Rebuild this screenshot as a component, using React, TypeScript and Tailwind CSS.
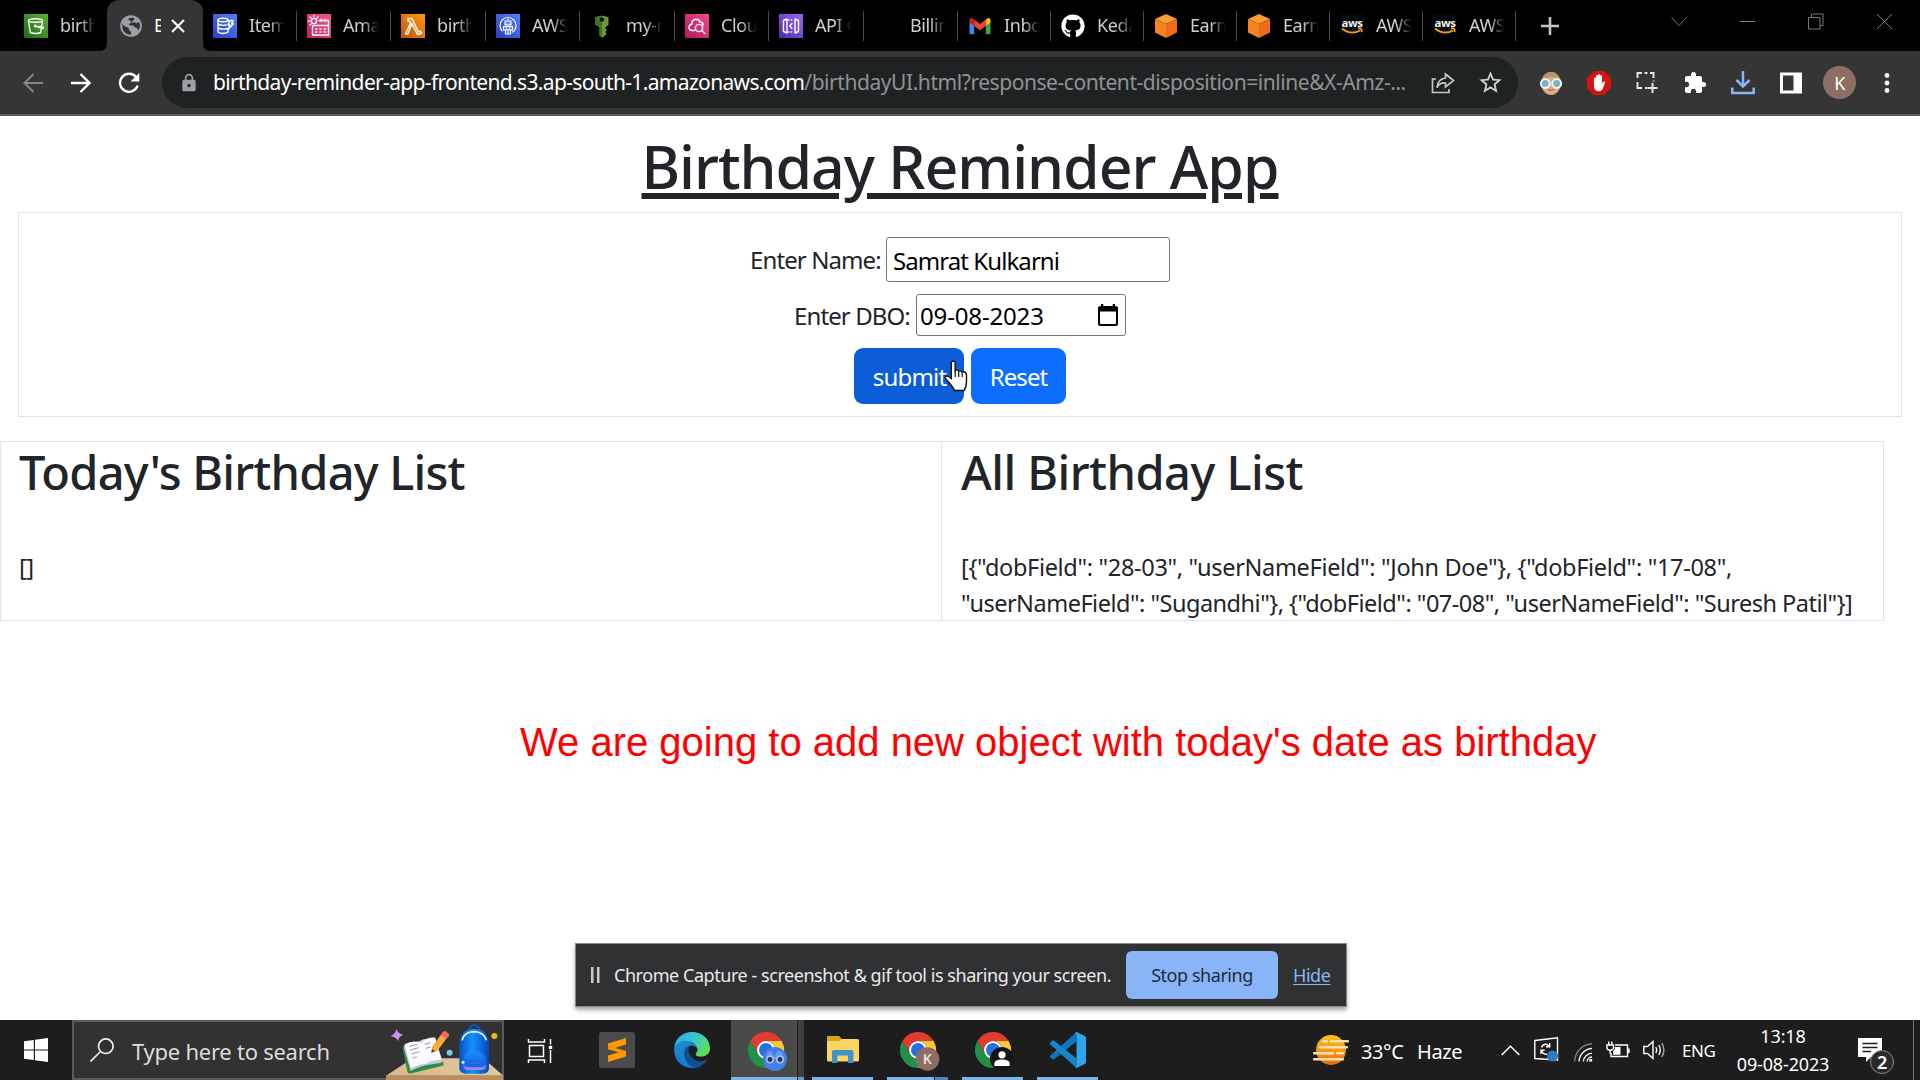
import React from "react";
import { FaGithub } from "react-icons/fa";
import { MdLock, MdStarBorder, MdExtension } from "react-icons/md";

type Tab = { title: string; icon: React.ReactNode; width: string };

const line = { fill: "none", stroke: "#fff", strokeWidth: 1.4, strokeLinecap: "round", strokeLinejoin: "round" } as const;

function Tile({ id, from, to, children }: { id: string; from: string; to: string; children: React.ReactNode }) {
  return (
    <svg viewBox="0 0 24 24" className="size-6">
      <defs>
        <linearGradient id={id} x1="0" y1="1" x2="1" y2="0">
          <stop offset="0" stopColor={from} />
          <stop offset="1" stopColor={to} />
        </linearGradient>
      </defs>
      <rect width="24" height="24" fill={`url(#${id})`} />
      <g {...line}>{children}</g>
    </svg>
  );
}

const S3Icon = () => (
  <Tile id="s3" from="#1f6b1c" to="#5fae35">
    <ellipse cx="11.5" cy="6.5" rx="7" ry="1.8" />
    <path d="M4.5 7 L6.3 18.5 Q11.5 20.5 16.7 18.5 L18.5 7 M11.5 12 L18.5 14.5 M15.8 12.5 Q19.5 12.5 19.5 14.2" />
    <circle cx="11.3" cy="12" r="0.8" fill="#fff" />
  </Tile>
);

const DynamoIcon = () => (
  <Tile id="ddb" from="#2e3fbf" to="#527fff">
    <ellipse cx="10" cy="6" rx="5" ry="1.8" />
    <path d="M5 6 V18 Q10 21 15 18 V15.5 M5 10 Q9 12 13 11 M5 14 Q10 16 14.5 14.5 M15 6 V7 M17 6.5 H20 L18.5 9.5 H20.5 L15.5 15 L16.8 11 H15 Z" />
  </Tile>
);

const EventIcon = () => (
  <Tile id="evt" from="#c21f5e" to="#f5558d">
    <circle cx="7" cy="7" r="2.6" />
    <path d="M7 1.5 V2.6 M1.5 7 H2.6 M3 3 L4 4 M11 3 L10 4 M3 11 L4 10 M12 6.5 H21.5 V21 H5.5 V12 M5.5 11.5 H21.5 M18 5 V7.5 M14 5 V7.5" />
    <path d="M8.5 15 H10 M12.8 15 H14.2 M17 15 H18.5 M8.5 18 H10 M12.8 18 H14.2 M17 18 H18.5" />
  </Tile>
);

const LambdaIcon = () => (
  <Tile id="lam" from="#c4510f" to="#ff9c08">
    <path d="M7 4.5 H11 L17.5 18 L19.5 17 L20.5 19.3 L16.5 20.5 L11 9.5 L6.8 20 H4.5 L9.7 8.5 L8.8 7 H7 Z" />
  </Tile>
);

const AwsBotIcon = () => (
  <Tile id="bot" from="#2e3fbf" to="#527fff">
    <g strokeWidth="1.2">
      <circle cx="12" cy="11.5" r="8" strokeDasharray="39 11.3" strokeDashoffset="-19" />
      <path d="M9 7 H15 V10.8 H9 Z M7.5 12.6 H16.5 V15.8 H7.5 Z M12 5 V7 M9.5 16 V20 H14.5 V16 M10.6 9 H11 M13.1 9 H13.5 M10.2 14.2 H10.6 M13.4 14.2 H13.8 M12 17 V19.6" />
    </g>
  </Tile>
);

const KeyIcon = () => (
  <svg viewBox="0 0 24 24" className="size-6">
    <path d="M5 3.5 Q12 0 18.5 3.5 V11 L15.5 13 V14.5 L17 16 L15.5 18 L16.5 20 L13 23.5 L9.5 22 V13 L5 10.5 Z" fill="#6b9a3a" />
    <path d="M5 3.5 Q8.5 1.5 12 1.7 V23 L9.5 22 V13 L5 10.5 Z" fill="#46702a" />
    <circle cx="12" cy="5.6" r="2.2" fill="#0a1206" />
  </svg>
);

const CloudIcon = () => (
  <Tile id="cw" from="#b0155c" to="#f24c8c">
    <path d="M9.5 16.5 H7 Q3.7 16 4 13 Q4.4 10.5 6.8 10.2 Q6.5 6 10.5 5.2 Q14 5 15 8 Q18 8 18.2 11" />
    <circle cx="14" cy="14" r="3.6" />
    <path d="M16.7 16.5 L20 19.5" />
  </Tile>
);

const ApiIcon = () => (
  <Tile id="api" from="#4f2aa8" to="#9668f0">
    <path d="M4.5 6.5 L8 5 V19 L4.5 17.5 Z M19.5 6.5 L16 5 V19 L19.5 17.5 Z M13 9.5 L10.8 12 L13 14.5" />
    <path d="M9.5 6 H14.5 M9.5 18 H14.5" strokeDasharray="0.5 2.2" />
  </Tile>
);

const GmailIcon = () => (
  <svg viewBox="0 0 24 24" className="size-6">
    <path d="M1.5 8 V19 Q1.5 20.2 2.7 20.2 H6.2 V11.5 Z" fill="#4285f4" />
    <path d="M22.5 8 V19 Q22.5 20.2 21.3 20.2 H17.8 V11.5 Z" fill="#34a853" />
    <path d="M6.2 5.5 V12 L12 16.3 L17.8 12 V5.5 L12 10 Z" fill="#ea4335" />
    <path d="M1.5 6 Q1.7 3 4.6 4.3 L6.2 5.5 V12 L1.5 8.5 Z" fill="#c5221f" />
    <path d="M22.5 6 Q22.3 3 19.4 4.3 L17.8 5.5 V12 L22.5 8.5 Z" fill="#fbbc04" />
  </svg>
);

const BoxIcon = () => (
  <svg viewBox="0 0 24 24" className="size-6">
    <path d="M12 0 L23 5 L12 10 L1 5 Z" fill="#fa9a33" />
    <path d="M1 5 L12 10 V24 L1 18.5 Z" fill="#f68220" />
    <path d="M23 5 L12 10 V24 L23 18.5 Z" fill="#ef6a1b" />
  </svg>
);

const AwsIcon = () => (
  <svg viewBox="0 0 24 24" className="size-6">
    <rect width="24" height="24" fill="#04080d" />
    <text x="12" y="12.5" textAnchor="middle" fontSize="11" fontWeight="700" fill="#f2f2f2" fontFamily="Open Sans, sans-serif" textLength="21" lengthAdjust="spacingAndGlyphs">aws</text>
    <path d="M2 14.5 Q11 21.5 20 16.5 M18 14.5 Q22.5 13.5 21.5 18" fill="none" stroke="#f39a1f" strokeWidth="1.9" />
  </svg>
);

const tabs: Tab[] = [
  { title: "Items", icon: <DynamoIcon />, width: "w-[94px]" },
  { title: "Amaz", icon: <EventIcon />, width: "w-[94px]" },
  { title: "birthd", icon: <LambdaIcon />, width: "w-[95px]" },
  { title: "AWS", icon: <AwsBotIcon />, width: "w-[94px]" },
  { title: "my-re", icon: <KeyIcon />, width: "w-[95px]" },
  { title: "Cloud", icon: <CloudIcon />, width: "w-[94px]" },
  { title: "API G", icon: <ApiIcon />, width: "w-[95px]" },
  { title: "Billing", icon: <span className="size-6" />, width: "w-[94px]" },
  { title: "Inbox", icon: <GmailIcon />, width: "w-[93px]" },
  { title: "Kedar", icon: <FaGithub className="size-6 text-white" />, width: "w-[93px]" },
  { title: "Earn", icon: <BoxIcon />, width: "w-[93px]" },
  { title: "Earn", icon: <BoxIcon />, width: "w-[93px]" },
  { title: "AWS", icon: <AwsIcon />, width: "w-[93px]" },
  { title: "AWS", icon: <AwsIcon />, width: "w-[93px]" },
];

function TabTitle({ children }: { children: React.ReactNode }) {
  return (
    <span className="mb-px ml-3 w-9 overflow-hidden text-lg leading-6 whitespace-nowrap text-[#cfcfcf] [mask-image:linear-gradient(to_right,black_55%,transparent)]">
      {children}
    </span>
  );
}

function TabStrip() {
  return (
    <div className="flex h-[51px] bg-black">
      <div className="flex w-[107px] items-center pl-6">
        <S3Icon />
        <TabTitle>birthd</TabTitle>
      </div>
      <div className="relative flex w-24 items-center rounded-t-xl bg-[#353535] pl-[12px]">
        <svg viewBox="0 0 8 8" className="absolute bottom-0 -left-2 size-2"><path d="M8 0 Q8 8 0 8 H8 Z" fill="#353535" /></svg>
        <svg viewBox="0 0 8 8" className="absolute -right-2 bottom-0 size-2"><path d="M0 0 Q0 8 8 8 H0 Z" fill="#353535" /></svg>
        <svg viewBox="0 0 24 24" className="size-6">
          <circle cx="12" cy="12" r="10.8" fill="#9aa0a6" />
          <path d="M3.2 9 Q4.5 12.5 7.5 13 Q10 13.3 10 15.5 Q10 17 12 17.5 V20.7 Q5 20.5 3.5 14.5 Z M9 5 Q12 3 15 4 Q15.5 7 12.5 7.5 Q12 9.5 9.5 10 Q10 11.5 14.5 11.7 Q15.5 13.5 18 14 L19.5 16.5 Q22 12 20 8 Q18 10 16 8.5 Q14 8 13.5 9 Z" fill="#2f3133" />
        </svg>
        <span className="mb-px ml-[11px] w-[7px] overflow-hidden text-lg leading-6 text-white">B</span>
        <svg viewBox="0 0 14 14" className="ml-[10px] size-3.5"><path d="M1 1 L13 13 M13 1 L1 13" stroke="#fff" strokeWidth="2.2" /></svg>
      </div>
      {tabs.map((t, i) => (
        <div key={i} className={"flex items-center pl-2.5 " + t.width}>
          {t.icon}
          <TabTitle>{t.title}</TabTitle>
          <span className="ml-auto h-[30px] w-px bg-[#4a4a4a]" />
        </div>
      ))}
      <div className="flex flex-1 items-center pl-[25px]">
        <svg viewBox="0 0 18 18" className="size-[18px]"><path d="M9 0 V18 M0 9 H18" stroke="#c4c4c4" strokeWidth="2.6" /></svg>
        <svg viewBox="0 0 226 22" className="mb-[9px] ml-[112px] h-[22px] w-[226px]" fill="none" stroke="#777" strokeWidth="1">
          <path d="M.5 7.5 L8 15.5 L15.5 7.5 M68.5 11.5 H84 M137.5 7.5 H149 V19 H137.5 Z M140.5 7.5 V4 H152 V15.5 H149 M206 4 L221 19 M221 4 L206 19" />
        </svg>
      </div>
    </div>
  );
}

function Toolbar() {
  return (
    <div className="flex h-[65px] items-center border-b-2 border-[#5c5d5d] bg-[#353535]">
      <svg viewBox="0 0 20 20" className="ml-[23px] size-5" fill="none" stroke="#858585" strokeWidth="2.1"><path d="M20 10 H1.5 M10.5 1 L1.5 10 L10.5 19" /></svg>
      <svg viewBox="0 0 20 20" className="ml-7 size-5" fill="none" stroke="#fff" strokeWidth="2.3"><path d="M0 10 H18.5 M9.5 1 L18.5 10 L9.5 19" /></svg>
      <svg viewBox="0 0 22 22" className="ml-[27px] size-[22px]">
        <path d="M18.2 5.4 A9 9 0 1 0 19.6 13.5" fill="none" stroke="#fff" strokeWidth="2.4" />
        <path d="M21.3 1 V9.5 H12.5 Z" fill="#fff" />
      </svg>
      <div className="ml-[22px] flex h-[51px] w-[1356px] items-center rounded-full bg-[#1f2223]">
        <MdLock className="ml-[17px] size-5 text-[#9aa0a6]" />
        <span className="mb-px ml-3.5 w-[1218px] text-[21px] leading-7 tracking-[-0.44px] whitespace-nowrap text-[#8e9296]">
          <span className="tracking-[-0.66px] text-white">birthday-reminder-app-frontend.s3.ap-south-1.amazonaws.com</span>
          /birthdayUI.html?response-content-disposition=inline&amp;X-Amz-...
        </span>
        <svg viewBox="0 0 24 24" className="size-6" fill="none" stroke="#c4c7c9" strokeWidth="1.7">
          <path d="M5 8 H1.5 V21.5 H18 V18 M14.5 3 L22.5 9.5 L14.5 16 V12 Q8.5 11.5 6 16.5 Q6.5 8 14.5 7 Z" />
        </svg>
        <MdStarBorder className="ml-[22px] size-[27px] text-[#d0d3d5]" />
      </div>
      <svg viewBox="0 0 24 24" className="ml-[21px] size-6">
        <ellipse cx="12" cy="12.5" rx="10" ry="11.5" fill="#b99a6b" />
        <path d="M4 9 Q12 2 20 9 V16 Q18 23 12 23.5 Q6 23 4 16 Z" fill="#e0ab8c" />
        <path d="M3 9 Q8 8 13 3 Q17 7 21 9 Q19 1 12 1 Q5 1 3 9" fill="#b59a66" />
        <circle cx="6.3" cy="12.5" r="4.4" fill="#7fb3c4" stroke="#f4f4f4" strokeWidth="2" />
        <circle cx="17.7" cy="12.5" r="4.4" fill="#7fb3c4" stroke="#f4f4f4" strokeWidth="2" />
        <path d="M9 18.5 Q12 20.5 15 18.5" stroke="#8b5a45" fill="none" />
      </svg>
      <svg viewBox="0 0 24 24" className="ml-6 size-6">
        <path d="M7 0 H17 L24 7 V17 L17 24 H7 L0 17 V7 Z" fill="#d8120f" />
        <path d="M7 12 V7.5 a1 1 0 0 1 2 0 V11 V5 a1 1 0 0 1 2 0 V10.5 V4 a1 1 0 0 1 2 0 V10.5 V5 a1 1 0 0 1 2 0 V12.5 L16.3 11 Q17.8 9.5 18.3 11 L16 17 Q15 20.3 11.5 20.3 Q7 20 7 15 Z" fill="#fff" />
      </svg>
      <svg viewBox="0 0 24 24" className="ml-6 size-6" fill="none" stroke="#e6e6e6" strokeWidth="1.9">
        <path d="M7 2 H2.5 V7 M2.5 11 V17 H7 M9.5 2 H12.5 M15 2 H18.5 V7 M18.5 9.5 V10.5 M10 17 H12 M17.5 12 V22 M12.5 17 H22.5" />
      </svg>
      <MdExtension className="ml-6 size-6 text-white" />
      <svg viewBox="0 0 24 24" className="ml-6 size-6" fill="none" stroke="#8ab4f8" strokeWidth="2.5">
        <path d="M12 0 V15 M5.5 9 L12 15.5 L18.5 9 M1.3 16.5 V22 H22.7 V16.5" />
      </svg>
      <svg viewBox="0 0 22 22" className="ml-[25px] size-[22px]"><path d="M0 .5 H22 V21.5 H0 Z M3 3.5 V18.5 H13.5 V3.5 Z" fill="#fff" fillRule="evenodd" /></svg>
      <span className="ml-[21px] flex size-[33px] items-center justify-center rounded-full bg-[#8d6e63] text-lg text-white">K</span>
      <svg viewBox="0 0 6 20" className="ml-[28px] h-5 w-1.5" fill="#fff"><circle cx="3" cy="2.5" r="2.4" /><circle cx="3" cy="10" r="2.4" /><circle cx="3" cy="17.5" r="2.4" /></svg>
    </div>
  );
}

function HandCursor() {
  return (
    <svg viewBox="0 0 24 32" className="absolute top-3 left-[90px] h-8 w-6">
      <path d="M7.3 18.5 V3 Q7.5 1 9.3 1 Q11 1 11.2 3 V10.5 Q12.8 9 14.5 11 Q16.5 10 18 12 Q21.5 11 22.5 14.5 V21 Q22.5 27 20 30.5 H10.5 Q9 27 4.5 22 Q0 17.5 1.5 16.3 Q3.5 15 7.3 18.5 Z" fill="#fff" stroke="#111" strokeWidth="1.4" />
      <path d="M11.2 10.5 V17 M14.7 11.5 V17 M18.2 12.5 V17" stroke="#111" strokeWidth="1.2" />
    </svg>
  );
}

function Page() {
  return (
    <main className="flex h-[904px] flex-col bg-white pt-3.5 text-2xl tracking-[-0.6px] text-[#212529]">
      <h1 className="mb-2.5 pt-px text-center text-[59px] leading-[71px] font-medium tracking-[-1.02px] underline decoration-[6px] underline-offset-[3.5px]">
        Birthday Reminder App
      </h1>
      <form className="mx-[18px] flex h-[205px] flex-col items-center border border-[#dee2e6] pt-6">
        <label className="flex items-center">
          <span className="w-[136px] pt-px tracking-[-0.9px] whitespace-nowrap">Enter Name:</span>
          <input readOnly value="Samrat Kulkarni" className="h-[45px] w-[284px] rounded-[3px] border border-[#767676] pt-px pl-1.5 tracking-[-0.93px] text-black outline-none" />
        </label>
        <label className="mt-3 flex items-center">
          <span className="w-[122px] pt-px tracking-[-0.9px] whitespace-nowrap">Enter DBO:</span>
          <span className="flex h-[42px] w-[210px] items-center rounded-[3px] border border-[#767676] pr-[7px] pl-[3px] text-black">
            <span className="pt-px tracking-[-0.15px]">09-08-2023</span>
            <svg viewBox="0 0 20 22" className="mb-px ml-auto h-[22px] w-5"><path d="M3 0 H5.2 V2 H14.8 V0 H17 V2 Q20 2 20 4 V20 Q20 22 18 22 H2 Q0 22 0 20 V4 Q0 2 3 2 Z M2 7.5 V20 H18 V7.5 Z" fillRule="evenodd" /></svg>
          </span>
        </label>
        <div className="relative mt-3 flex gap-[7px] text-white">
          <button type="button" className="h-14 w-[110px] rounded-[9px] bg-[#0b5ed7] pt-0.5 pl-px tracking-[-0.8px]">submit</button>
          <button type="button" className="h-14 w-[95px] rounded-[9px] bg-[#0d6efd] pt-0.5 tracking-[-0.9px]">Reset</button>
          <HandCursor />
        </div>
      </form>
      <div className="mt-6 flex h-[180px] w-[1884px] border border-[#dee2e6]">
        <section className="w-[942px] border-r border-[#dee2e6] pt-px pl-[18px]">
          <h2 className="mb-12 text-[47px] leading-[58px] font-medium tracking-[-0.76px]">Today's Birthday List</h2>
          <p className="leading-9">[]</p>
        </section>
        <section className="w-[942px] pt-px pl-[19px]">
          <h2 className="mb-12 text-[47px] leading-[58px] font-medium tracking-[-0.52px]">All Birthday List</h2>
          <p className="text-[23.5px] leading-9 tracking-[-0.5px] whitespace-nowrap">
            <span className="tracking-[-0.32px]">{'[{"dobField": "28-03", "userNameField": "John Doe"}, {"dobField": "17-08",'}</span>
            <br />
            {'"userNameField": "Sugandhi"}, {"dobField": "07-08", "userNameField": "Suresh Patil"}]'}
          </p>
        </section>
      </div>
      <p className="mt-[98px] pl-[520px] font-['Liberation_Sans'] text-[40px] leading-[46px] tracking-normal text-[#ff0000]">
        We are going to add new object with today's date as birthday
      </p>
      <div className="mt-auto mb-[13px] ml-[575px] flex h-16 w-[772px] items-center border border-[#8a8a8a] bg-[#2f3133] pl-[15px] text-lg tracking-[-0.45px] text-[#e8eaed] shadow-[0_3px_4px_rgba(0,0,0,0.35)]">
        <svg viewBox="0 0 9 16" className="h-4 w-[9px]"><path d="M0 0 H2.5 V16 H0 Z M6 0 H8.5 V16 H6 Z" fill="#c8cacc" /></svg>
        <span className="mb-px ml-[14px] w-[512px] whitespace-nowrap">Chrome Capture - screenshot &amp; gif tool is sharing your screen.</span>
        <button type="button" className="h-12 w-[152px] rounded-md bg-[#8ab4f8] text-[#202c40]">Stop sharing</button>
        <a className="ml-[15px] text-[#8ab4f8] underline underline-offset-2">Hide</a>
      </div>
    </main>
  );
}

function SearchArt() {
  return (
    <svg viewBox="18 15 354 180" className="ml-auto h-[60px] w-[118px]">
      <defs>
        <linearGradient id="desk" x1="0" x2="1"><stop offset="0" stopColor="#d9b98c" /><stop offset="1" stopColor="#e3c79c" /></linearGradient>
        <linearGradient id="bag" x1="0" x2="1"><stop offset="0" stopColor="#0a52c4" /><stop offset=".45" stopColor="#1490ff" /><stop offset="1" stopColor="#0a48b8" /></linearGradient>
        <linearGradient id="pocket" x1="0" y1="0" x2="0" y2="1"><stop offset="0" stopColor="#1c8dff" /><stop offset=".6" stopColor="#1769e8" /><stop offset="1" stopColor="#b68cf5" /></linearGradient>
      </defs>
      <path d="M18 182 L98 130 H310 L370 182 Z" fill="url(#desk)" />
      <path d="M18 182 H370 V195 H18 Z" fill="#b98d5c" />
      <path d="M50 41 Q52 54 70 60 Q56 63 55 78 Q48 66 32 63 Q47 56 50 41 Z" fill="#d58bf5" />
      <path d="M68 98 L82 170 Q84 178 96 175 L188 152 Q193 150 190 144 L182 126 Z" fill="#2f8f45" />
      <path d="M70 92 L120 78 Q128 70 165 72 L186 132 Q190 142 180 144 L140 150 Q110 158 92 168 Z" fill="#c9c9e4" />
      <path d="M74 88 Q100 74 124 84 L138 146 Q110 148 92 160 Z M124 84 Q140 66 166 68 L184 134 Q155 134 138 146 Z" fill="#fbfbff" />
      <path d="M88 94 L112 88 M91 105 L116 98 M94 117 L119 110 M97 129 L110 125 M134 88 L152 83 M137 100 L152 96" stroke="#9a9ab4" strokeWidth="3" />
      <path d="M156 96 L184 58 L200 70 L172 108 L154 114 Z" fill="#f7ab3a" />
      <path d="M182 60 L190 49 Q194 46 199 50 L206 56 Q209 60 206 64 L199 72 Z" fill="#ee6c5a" />
      <path d="M154 114 L156 102 L165 108 Z" fill="#5a3a2a" />
      <circle cx="209" cy="113" r="9" fill="#73cbe0" />
      <circle cx="343" cy="63" r="9" fill="#f5b51e" />
      <path d="M267 46 Q270 31 283 31 Q296 31 299 46" fill="none" stroke="#0d55b8" strokeWidth="6" />
      <path d="M238 88 Q240 42 282 41 Q326 42 327 88 V160 Q326 176 308 176 H256 Q238 175 238 160 Z" fill="url(#bag)" />
      <path d="M246 76 Q252 51 282 50 Q312 51 319 76" fill="none" stroke="#dcefff" strokeWidth="5" />
      <path d="M250 136 Q254 108 283 107 Q314 108 318 136 V152 Q316 165 304 165 H264 Q252 164 250 152 Z" fill="url(#pocket)" />
      <path d="M250 136 Q265 148 283 148 Q302 148 318 136 V148 Q310 156 304 156 H264 Q255 154 250 148 Z" fill="#1467e0" />
      <circle cx="249" cy="142" r="4.5" fill="#f2f6ff" />
    </svg>
  );
}

function ChromeLogo({ children }: { children: React.ReactNode }) {
  return (
    <svg viewBox="0 0 42 42" className="mt-1 ml-[7px] size-[42px]">
      <path d="M18 9 H33.6 A18 18 0 0 0 2.4 9 L10.2 22.5 A9 9 0 0 1 18 9Z" fill="#e33b2e" />
      <path d="M33.6 9 A18 18 0 0 1 18 36 L25.8 22.5 A9 9 0 0 0 18 9Z" fill="#fcc934" />
      <path d="M2.4 9 A18 18 0 0 0 18 36 L25.8 22.5 A9 9 0 0 1 10.2 22.5Z" fill="#1f9247" />
      <circle cx="18" cy="18" r="9" fill="#fff" />
      <circle cx="18" cy="18" r="7" fill="#2a6fe0" />
      {children}
    </svg>
  );
}

function EdgeLogo() {
  return (
    <svg viewBox="0 0 36 36" className="size-9">
      <defs>
        <linearGradient id="edgeTop" x1="0" y1="0.2" x2="1" y2="0.6"><stop offset="0" stopColor="#2aa7dd" /><stop offset=".5" stopColor="#35c8d0" /><stop offset="1" stopColor="#63e04c" /></linearGradient>
        <linearGradient id="edgeLeft" x1="0" y1="0" x2="0.6" y2="1"><stop offset="0" stopColor="#2389c8" /><stop offset="1" stopColor="#0b7bd4" /></linearGradient>
      </defs>
      <path d="M.3 16 C1 6 9 0 18 0 C28 0 36 7 36 16.5 C36 22 31.5 24.5 27 24.5 C22 24.5 20.8 22.7 22.2 21 C23.5 19.5 23.8 18 23.3 16 C21 9 6 7 .3 16Z" fill="url(#edgeTop)" />
      <path d="M.3 16 C3 10.5 8 8.5 12.5 8.8 C19 9 23 12.5 23.4 17 C21.5 13.2 17 12.2 14.5 15 C10 20 14 30 23 30.5 C28 30.7 30.5 28.5 33 27.5 C30 33 24 36 18 36 C7 36 -1 27 .3 16Z" fill="url(#edgeLeft)" />
      <path d="M15.5 13.5 C9 15.5 9.5 24 12 28.5 C14 32.5 17.5 35.5 21.5 35.6 C27 34.8 31 31.5 33.2 27.5 C29 30 24.5 30 20.5 27.5 C15 24 13.3 18 15.5 13.5Z" fill="#124e94" />
    </svg>
  );
}

function TaskItem({ bar, children }: { bar?: boolean; children: React.ReactNode }) {
  return (
    <div className="flex h-full w-[75px] flex-col items-center">
      <div className="flex flex-1 items-center justify-center">{children}</div>
      <span className={bar ? "h-[3px] w-[61px] bg-[#7ab4e8]" : "h-[3px]"} />
    </div>
  );
}

function Taskbar() {
  return (
    <footer className="flex h-[60px] items-center bg-[#1e1d1d] text-white">
      <svg viewBox="0 0 24 24" className="ml-6 size-6" fill="#fff"><path d="M0 3.3 L9.8 2 V11.4 H0 Z M11 1.8 L24 0 V11.4 H11 Z M0 12.6 H9.8 V22 L0 20.7 Z M11 12.6 H24 V24 L11 22.2 Z" /></svg>
      <div className="ml-6 flex h-[60px] w-[432px] items-center bg-[#323232] shadow-[inset_0_0_0_2px_#5b5b5b]">
        <svg viewBox="0 0 24 24" className="ml-[18px] size-6" fill="none" stroke="#f0f0f0" strokeWidth="1.7"><circle cx="15.8" cy="8.2" r="7.3" /><path d="M10.5 13.5 L.5 23.5" /></svg>
        <span className="mt-[3px] ml-[18px] text-[22px] tracking-[-0.25px] whitespace-nowrap text-[#dcdcdc]">Type here to search</span>
        <SearchArt />
      </div>
      <TaskItem>
        <svg viewBox="0 0 26 24" className="-mb-1 ml-[-3px] h-6 w-[26px]" fill="none" stroke="#fff" strokeWidth="1.5">
          <path d="M2.5 6.5 H16.5 V17.5 H2.5 Z M1.5 0 V3 H17.5 V0 M1.5 24 V21 H17.5 V24 M23.5 0 V5.5 M23.5 11 V24" />
          <path d="M21.8 6.8 H25.2 V10 H21.8 Z" fill="#fff" stroke="none" />
        </svg>
      </TaskItem>
      <TaskItem>
        <svg viewBox="0 0 36 36" className="mt-[3px] size-9">
          <rect width="36" height="36" rx="2.5" fill="#4b4b4b" />
          <path d="M9 11.5 L27 6 V12.5 L16 16 L27 19 V24.5 L9 30 V23.5 L20 20.3 L9 17.3 Z" fill="#ff9800" />
        </svg>
      </TaskItem>
      <TaskItem><div className="mt-[3px]"><EdgeLogo /></div></TaskItem>
      <div className="flex h-full w-[75px] pl-[2px]">
        <div className="flex h-full w-[66px] flex-col items-center bg-[#4a4a4a]">
          <div className="flex flex-1 items-center pt-[5px] pl-[3px]">
            <ChromeLogo>
              <circle cx="27" cy="27" r="12" fill="#4380ea" />
              <path d="M17.5 27 L20 20 L23 19 L26 25 L30 19 L34 20 L36 27" fill="#6a9af2" />
              <circle cx="22" cy="27.5" r="3.2" fill="#20355c" stroke="#a8bfe8" strokeWidth="1.6" />
              <circle cx="32" cy="27.5" r="3.2" fill="#20355c" stroke="#a8bfe8" strokeWidth="1.6" />
            </ChromeLogo>
          </div>
          <span className="h-[3px] w-full bg-[#7ab4e8]" />
        </div>
        <div className="flex h-full w-[7px] flex-col border-l border-[#1e1d1d] bg-[#3f3f3f]"><span className="mt-auto h-[3px] bg-[#6a9dcb]" /></div>
      </div>
      <div className="w-px" />
      <TaskItem bar>
        <svg viewBox="0 0 32 28" className="mt-[2px] h-7 w-8">
          <path d="M0 1.5 Q0 .3 1.2 .3 H12 L14.5 3 H30.5 Q32 3 32 4.5 V24 Q32 25.5 30.5 25.5 H1.5 Q0 25.5 0 24 Z" fill="#fbd461" />
          <path d="M0 1.5 Q0 .3 1.2 .3 H12 L14.5 3 L12.5 5 H0 Z" fill="#dba514" />
          <path d="M5 27 V16 Q5 14 7 14 H24.5 Q26.5 14 26.5 16 V27 H21 V19.5 H10.5 V27 Z" fill="#3f93cf" />
        </svg>
      </TaskItem>
      <div className="flex h-full w-[75px] flex-col items-center">
        <div className="flex flex-1 items-center pt-[5px]">
          <ChromeLogo>
            <circle cx="27.5" cy="27" r="11.8" fill="#8d6e63" />
            <text x="27" y="32" textAnchor="middle" fontSize="14" fontWeight="600" fill="#e8dfdb">K</text>
          </ChromeLogo>
        </div>
        <div className="flex h-[3px] w-[61px]"><span className="w-[47px] bg-[#7ab4e8]" /><span className="ml-px flex-1 bg-[#5586b3]" /></div>
      </div>
      <TaskItem bar>
        <div className="pt-[5px]">
          <ChromeLogo>
            <circle cx="27" cy="27" r="12" fill="#161616" />
            <circle cx="27" cy="22.8" r="3.6" fill="#fff" />
            <path d="M19.3 34 V31 Q20 27.8 27 27.5 Q34 27.8 34.7 31 V34 Z" fill="#fff" />
          </ChromeLogo>
        </div>
      </TaskItem>
      <TaskItem bar>
        <svg viewBox="0 0 36 36" className="mt-[3px] size-9">
          <path d="M26.5 0 V9.5 L4.5 27 Q3 28 1.5 26.7 L.5 25.7 Q-.5 24.5 .7 23.3 Z" fill="#0f74ba" />
          <path d="M26.5 36 V26.5 L4.5 9 Q3 8 1.5 9.3 L.5 10.3 Q-.5 11.5 .7 12.7 Z" fill="#1585cc" />
          <path d="M26.5 0 L34.8 4 Q36 4.7 36 6 V30 Q36 31.3 34.8 32 L26.5 36 Q25.3 35.8 24.9 34.8 L26.5 34 V2 L24.9 1.2 Q25.3 .2 26.5 0 Z" fill="#2fa5ee" />
        </svg>
      </TaskItem>
      <div className="ml-[208px] flex flex-1 items-center">
        <svg viewBox="0 0 36 30" className="h-[30px] w-9">
          <defs><linearGradient id="sun" x1="0" y1="0" x2="0" y2="1"><stop offset="0" stopColor="#f8c51c" /><stop offset="1" stopColor="#ea6a10" /></linearGradient></defs>
          <circle cx="18" cy="15" r="15" fill="url(#sun)" />
          <path d="M18 6.2 H35 M7 12.3 H34 M1 18.3 H20 M24 18.3 H30 M1 24.2 H30 M10 6.2 H14" stroke="#f7dfae" strokeWidth="2.4" strokeLinecap="round" />
        </svg>
        <span className="mt-1 ml-3 w-[56px] text-[20px] tracking-[-0.4px]">33°C</span>
        <span className="mt-1 w-[84px] text-[20px] tracking-[-0.4px]">Haze</span>
        <svg viewBox="0 0 19 11" className="h-[11px] w-[19px]" fill="none" stroke="#fff" strokeWidth="1.5"><path d="M.7 10 L9.5 1.2 L18.3 10" /></svg>
        <svg viewBox="0 0 25 25" className="mb-[2px] ml-[14px] size-[25px]" fill="none" stroke="#fff" strokeWidth="1.4">
          <path d="M.8 3.5 L23.5 .8 V23 L.8 21.5 Z M7.5 10.5 Q9 6.5 13 7.5 L15.5 9.5 M15.7 6 V9.7 H12 M7 17 V13.3 H10.7 M7.3 13.8 Q9 17.5 13 17.3" />
          <circle cx="18.5" cy="19" r="5.6" fill="#2f78c4" stroke="none" />
        </svg>
        <svg viewBox="0 0 19 19" className="mt-1 ml-[15px] size-[19px]" fill="none" strokeWidth="1.4">
          <path d="M.7 18.5 A18 18 0 0 1 18 .7" stroke="#7c7c7c" /><path d="M5 18.5 A13.5 13.5 0 0 1 18 5.5 M9.3 18.5 A9 9 0 0 1 18 10.3 M13 18.5 A5 5 0 0 1 18 14" stroke="#f2f2f2" /><circle cx="16.7" cy="17.2" r="1.5" fill="#fff" />
        </svg>
        <svg viewBox="0 0 24 18" className="mb-px ml-[13px] h-[18px] w-6" fill="none" stroke="#fff" strokeWidth="1.4">
          <path d="M9 4 H21.5 V15.5 H5 V12 M23 7.5 V12 M1 4 H7.5 V7 Q7.5 9 4.2 9.2 Q1 9 1 7 Z M2.7 4 V.5 M5.8 4 V.5 M4.2 9 V13" /><path d="M9 6 H14.5 V13.7 H7 V10.5 Q9 9.5 9 6 Z" fill="#fff" stroke="none" />
        </svg>
        <svg viewBox="0 0 23 20" className="ml-[13px] h-5 w-[23px]" fill="none" stroke="#fff" strokeWidth="1.4">
          <path d="M.8 6.5 H4.5 L10 1.5 V18.5 L4.5 13.5 H.8 Z M12.8 7 Q14.5 10 12.8 13 M15.8 5 Q18.8 10 15.8 15" /><path d="M18.8 3 Q23 10 18.8 17" stroke="#a8a8a8" />
        </svg>
        <span className="mt-0.5 ml-4 w-[54px] text-[17px] tracking-[-0.4px]">ENG</span>
        <div className="flex w-[94px] flex-col items-center text-lg leading-7 tracking-[-0.15px] whitespace-nowrap">
          <span>13:18</span>
          <span>09-08-2023</span>
        </div>
        <div className="relative ml-[28px] h-6 w-[38px]">
          <svg viewBox="0 0 24 24" className="size-6"><path d="M0 0 H24 V19 H13 L8 24 V19 H0 Z" fill="#fff" /><path d="M4.5 5.5 H19.5 M4.5 9.5 H19.5 M4.5 13.5 H13" stroke="#1e1d1d" strokeWidth="1.3" /></svg>
          <span className="absolute top-3 left-3 flex size-6 items-center justify-center rounded-full border border-[#8a8a8a] bg-[#2a2a2a] text-lg font-semibold">2</span>
        </div>
        <span className="ml-[17px] h-[60px] w-px bg-[#777]" />
      </div>
    </footer>
  );
}

export default function App() {
  return (
    <div className="flex h-[1080px] w-[1920px] flex-col overflow-hidden bg-white font-['Noto_Sans','Open_Sans',sans-serif] tracking-[-0.4px]">
      <TabStrip />
      <Toolbar />
      <Page />
      <Taskbar />
    </div>
  );
}
